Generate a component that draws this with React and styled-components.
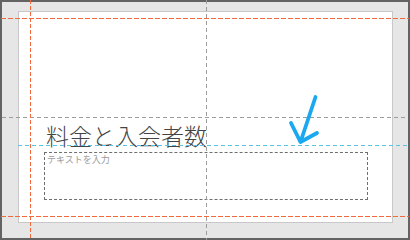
import React from 'react'
import styled, { createGlobalStyle } from 'styled-components'

const Global = createGlobalStyle`
    html, body {
        margin: 0;
        padding: 0;
        background: #ffffff;
    }
`;

const Screen = styled.div`
    position: relative;
    width: 410px;
    height: 240px;
    box-sizing: border-box;
    padding: 11px 0 0 18px;
    background-color: #e6e6e6;
    box-shadow: inset 0 0 0 2px #636363;
    overflow: hidden;
`;

const Slide = styled.div`
    width: 375px;
    height: 212px;
    box-sizing: border-box;
    border: 1px solid #c8c8c8;
    background-color: #ffffff;
    display: flex;
    flex-direction: column;
    justify-content: flex-end;
    padding: 0 0 22px 25px;
`;

const Title = styled.div`
    font-family: "Noto Sans CJK JP Light", "Noto Sans CJK JP DemiLight", "Noto Sans CJK JP", "Noto Sans", sans-serif;
    font-weight: 300;
    font-size: 23px;
    line-height: 28px;
    color: #444444;
    padding-left: 2px;
    margin-bottom: 3px;
    white-space: nowrap;
`;

const TextBox = styled.div`
    width: 324px;
    height: 48px;
    box-sizing: border-box;
    border: 1px dashed #6e6e6e;
    padding: 1px 0 0 2px;
    font-family: "Noto Sans CJK JP", "Noto Sans", sans-serif;
    font-size: 9px;
    line-height: 12px;
    color: #9a9a9a;
`;

/* layout guides drawn over the slide */
const HGuide = styled.div`
    position: absolute;
    top: ${p => p.y}px;
    left: ${p => p.from}px;
    width: ${p => p.to - p.from}px;
    height: 1px;
    background-image: repeating-linear-gradient(
        to right,
        ${p => p.color} 0 ${p => p.dash}px,
        transparent ${p => p.dash}px ${p => p.dash + p.gap}px
    );
`;

const VGuide = styled.div`
    position: absolute;
    left: ${p => p.x}px;
    top: 0;
    width: 1px;
    height: 240px;
    background-image: repeating-linear-gradient(
        to bottom,
        ${p => p.color} 0 ${p => p.dash}px,
        transparent ${p => p.dash}px ${p => p.dash + p.gap}px
    );
`;

const Arrow = styled.svg`
    position: absolute;
    left: 285px;
    top: 90px;
`;

const ORANGE = '#f26a3c'
const GRAY = '#9c9c9c'
const CYAN = '#5cc2e2'

export default function App() {
  return (
    <>
      <Global />
      <Screen>
        <Slide>
          <Title>料金と入会者数</Title>
          <TextBox>テキストを入力</TextBox>
        </Slide>

        <HGuide y={117} from={2} to={408} color={GRAY} dash={4} gap={3} />
        <HGuide y={145} from={18} to={408} color={CYAN} dash={4} gap={3} />
        <HGuide y={18} from={1} to={409} color={ORANGE} dash={5} gap={2} />
        <HGuide y={216} from={1} to={409} color={ORANGE} dash={5} gap={2} />
        <VGuide x={206} color={GRAY} dash={4} gap={3} />
        <VGuide x={30} color={ORANGE} dash={4} gap={2} />

        <Arrow width="40" height="60" viewBox="0 0 40 60">
          <path
            d="M30.5 7 L15.5 52 M6 33 L15.5 52 L32 43"
            fill="none"
            stroke="#1aa9f0"
            strokeWidth="3.8"
            strokeLinecap="round"
            strokeLinejoin="round"
          />
        </Arrow>
      </Screen>
    </>
  )
}
